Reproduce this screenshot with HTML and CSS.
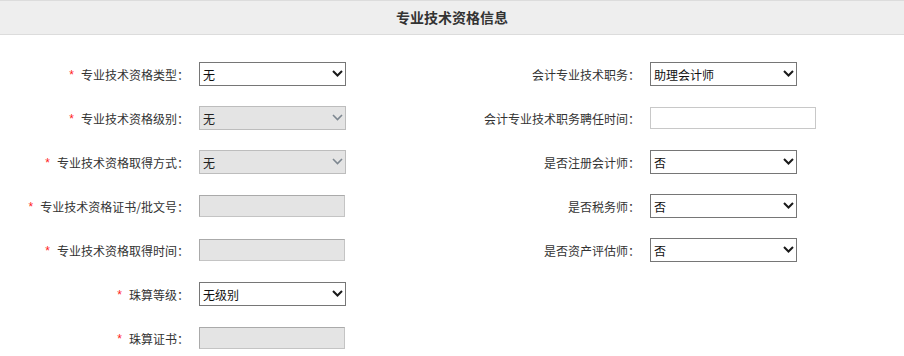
FILE: index.html
```html
<!DOCTYPE html>
<html lang="zh">
<head>
<meta charset="utf-8">
<title>专业技术资格信息</title>
<link rel="stylesheet" href="styles.css">
</head>
<body>
<div class="panel">
  <div class="panel-head">专业技术资格信息</div>
  <div class="form">
    <div class="col">
      <div class="field">
        <label class="lbl"><span class="req">*</span>专业技术资格类型：</label>
        <div class="sel">
          <select class="ctl"><option>无</option></select>
          <svg class="arrow" width="11" height="7" viewBox="0 0 11 7"><polyline points="1,1 5.5,5.5 10,1" fill="none" stroke="#1a1a1a" stroke-width="2"/></svg>
        </div>
      </div>
      <div class="field">
        <label class="lbl"><span class="req">*</span>专业技术资格级别：</label>
        <div class="sel off">
          <select class="ctl" disabled><option>无</option></select>
          <svg class="arrow" width="11" height="7" viewBox="0 0 11 7"><polyline points="1,1 5.5,5.5 10,1" fill="none" stroke="#7d8790" stroke-width="1.6"/></svg>
        </div>
      </div>
      <div class="field">
        <label class="lbl"><span class="req">*</span>专业技术资格取得方式：</label>
        <div class="sel off">
          <select class="ctl" disabled><option>无</option></select>
          <svg class="arrow" width="11" height="7" viewBox="0 0 11 7"><polyline points="1,1 5.5,5.5 10,1" fill="none" stroke="#7d8790" stroke-width="1.6"/></svg>
        </div>
      </div>
      <div class="field">
        <label class="lbl"><span class="req">*</span>专业技术资格证书/批文号：</label>
        <input class="txt off" type="text" disabled>
      </div>
      <div class="field">
        <label class="lbl"><span class="req">*</span>专业技术资格取得时间：</label>
        <input class="txt off" type="text" disabled>
      </div>
      <div class="field">
        <label class="lbl"><span class="req">*</span>珠算等级：</label>
        <div class="sel">
          <select class="ctl"><option>无级别</option></select>
          <svg class="arrow" width="11" height="7" viewBox="0 0 11 7"><polyline points="1,1 5.5,5.5 10,1" fill="none" stroke="#1a1a1a" stroke-width="2"/></svg>
        </div>
      </div>
      <div class="field">
        <label class="lbl"><span class="req">*</span>珠算证书：</label>
        <input class="txt off" type="text" disabled>
      </div>
    </div>
    <div class="col">
      <div class="field">
        <label class="lbl">会计专业技术职务：</label>
        <div class="sel">
          <select class="ctl"><option>助理会计师</option></select>
          <svg class="arrow" width="11" height="7" viewBox="0 0 11 7"><polyline points="1,1 5.5,5.5 10,1" fill="none" stroke="#1a1a1a" stroke-width="2"/></svg>
        </div>
      </div>
      <div class="field">
        <label class="lbl">会计专业技术职务聘任时间：</label>
        <input class="txt wide" type="text">
      </div>
      <div class="field">
        <label class="lbl">是否注册会计师：</label>
        <div class="sel">
          <select class="ctl"><option>否</option></select>
          <svg class="arrow" width="11" height="7" viewBox="0 0 11 7"><polyline points="1,1 5.5,5.5 10,1" fill="none" stroke="#1a1a1a" stroke-width="2"/></svg>
        </div>
      </div>
      <div class="field">
        <label class="lbl">是否税务师：</label>
        <div class="sel">
          <select class="ctl"><option>否</option></select>
          <svg class="arrow" width="11" height="7" viewBox="0 0 11 7"><polyline points="1,1 5.5,5.5 10,1" fill="none" stroke="#1a1a1a" stroke-width="2"/></svg>
        </div>
      </div>
      <div class="field">
        <label class="lbl">是否资产评估师：</label>
        <div class="sel">
          <select class="ctl"><option>否</option></select>
          <svg class="arrow" width="11" height="7" viewBox="0 0 11 7"><polyline points="1,1 5.5,5.5 10,1" fill="none" stroke="#1a1a1a" stroke-width="2"/></svg>
        </div>
      </div>
    </div>
  </div>
</div>
</body>
</html>
```

FILE: styles.css
```css
html, body {
  margin: 0;
  padding: 0;
  background: #fff;
}
body {
  font-family: "Noto Sans CJK SC", "Liberation Sans", sans-serif;
  font-size: 12px;
  color: #333;
}
.panel-head {
  height: 33px;
  line-height: 33px;
  background: #eeeeee;
  border-top: 1px solid #dcdcdc;
  border-bottom: 1px solid #dcdcdc;
  text-align: center;
  font-size: 14px;
  font-weight: bold;
  color: #333;
}
.form {
  display: flex;
  padding-top: 17px;
}
.col {
  width: 451px;
  display: flex;
  flex-direction: column;
}
.col + .col {
  width: 453px;
}
.field {
  height: 44px;
  display: flex;
  align-items: center;
}
.lbl {
  width: 189px;
  text-align: right;
  white-space: nowrap;
  margin-right: 10px;
  color: #333;
}
.req {
  color: #f22;
  font-family: "Liberation Sans", sans-serif;
  font-size: 12px;
  margin-right: 7px;
  position: relative;
  top: -1px;
}
.sel {
  position: relative;
  width: 147px;
  height: 24px;
}
.ctl {
  -webkit-appearance: none;
  appearance: none;
  box-sizing: border-box;
  width: 147px;
  height: 24px;
  margin: 0;
  padding: 0 18px 0 3px;
  border: 1px solid #767676;
  border-radius: 0;
  background: #fff;
  color: #111;
  font-family: "Noto Sans CJK SC", "Liberation Sans", sans-serif;
  font-size: 12px;
  opacity: 1;
}
.sel.off .ctl {
  background: #e4e4e4;
  border-color: #bdbdbd;
  color: #222;
}
.arrow {
  position: absolute;
  right: 3px;
  top: 8px;
  pointer-events: none;
}
.txt {
  box-sizing: border-box;
  width: 146px;
  height: 22px;
  margin: 0;
  padding: 0 3px;
  border: 1px solid #c8c8c8;
  border-radius: 0;
  background: #fff;
  font-family: "Noto Sans CJK SC", "Liberation Sans", sans-serif;
  font-size: 12px;
}
.txt.off {
  background: #e4e4e4;
  border-color: #aaaaaa #c4c4c4 #c4c4c4 #aaaaaa;
}
.txt.wide {
  width: 166px;
  border-color: #c8c8c8;
}
```
